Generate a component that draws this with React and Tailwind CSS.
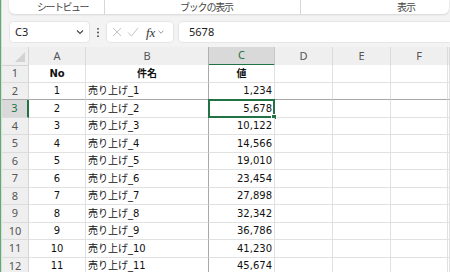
import React from "react";

const ui = { fontFamily: '"Noto Sans", "Noto Sans CJK JP", sans-serif' };
const data = { fontFamily: '"DejaVu Sans", "Noto Sans CJK JP", sans-serif' };
const jp = { fontFamily: '"Noto Sans CJK JP", sans-serif' };

const COLS = "grid-cols-[27px_57px_123px_66px_58px_58px_57px_1fr]";

const values = [1234, 5678, 10122, 14566, 19010, 23454, 27898, 32342, 36786, 41230, 45674];

function Chevron({ className }) {
  return (
    <svg viewBox="0 0 10 10" className={className} fill="none" stroke="currentColor" strokeWidth="1.1">
      <path d="M2 3.5 L5 6.5 L8 3.5" />
    </svg>
  );
}

function HeaderRow() {
  const letters = ["A", "B", "C", "D", "E", "F", ""];
  return (
    <div className={`grid ${COLS} h-[18px] shrink-0`}>
      <div className="relative bg-[#efefef] border-r border-b border-[#d4d4d4]">
        <svg viewBox="0 0 10 10" className="absolute right-[3px] bottom-[3px] w-[10px] h-[10px]">
          <path d="M10 0 L10 10 L0 10 Z" fill="#d2d2d2" />
        </svg>
      </div>
      {letters.map((l, i) => {
        const sel = l === "C";
        const freeze = l === "B";
        return (
          <div
            key={i}
            style={ui}
            className={`flex items-center justify-center text-[11px] ${
              sel
                ? "bg-[#d9d9d9] text-[#217346] border-b-2 border-b-[#217346] border-r border-r-[#c8c8c8]"
                : `bg-[#efefef] text-[#555] border-b border-b-[#d4d4d4] border-r ${freeze ? "border-r-[#b0b0b0]" : "border-r-[#dadada]"}`
            }`}
          >
            {l}
          </div>
        );
      })}
    </div>
  );
}

function DataRow({ r }) {
  const isHeader = r === 1;
  const sel = r === 3;
  const freezeBottom = r === 2;
  const n = r - 1;
  const cells = isHeader
    ? ["No", "件名", "値"]
    : [String(n), `売り上げ_${n}`, values[n - 1].toLocaleString("en-US")];
  const bottom = freezeBottom ? "border-b-[#a8a8a8]" : "border-b-[#e1e1e1]";
  return (
    <div className={`grid ${COLS} h-[17.5px] shrink-0`}>
      <div
        style={ui}
        className={`flex items-center justify-center text-[11px] border-b ${
          freezeBottom ? "border-b-[#a8a8a8]" : "border-b-[#dcdcdc]"
        } ${
          sel
            ? "bg-[#d9d9d9] text-[#217346] border-r-2 border-r-[#217346]"
            : "bg-[#efefef] text-[#555] border-r border-r-[#d4d4d4]"
        }`}
      >
        {r}
      </div>
      <div
        style={data}
        className={`flex items-center justify-center text-[10px] text-[#111] bg-white border-r border-r-[#e1e1e1] border-b ${bottom} ${
          isHeader ? "font-bold" : ""
        }`}
      >
        {cells[0]}
      </div>
      <div
        style={data}
        className={`flex items-center ${isHeader ? "justify-center font-bold" : "justify-start pl-[2px]"} text-[10px] text-[#111] bg-white border-r border-r-[#a8a8a8] border-b ${bottom}`}
      >
        {cells[1]}
      </div>
      <div
        style={data}
        className={`relative flex items-center ${isHeader ? "justify-center font-bold" : "justify-end pr-[2px]"} text-[10px] text-[#111] bg-white border-r border-r-[#e1e1e1] border-b ${bottom}`}
      >
        {cells[2]}
        {sel && (
          <div className="absolute left-[-1px] top-[-1px] right-[-1px] bottom-[-1px] border-2 border-[#217346]">
            <div className="absolute right-[-4px] bottom-[-4px] w-[6px] h-[6px] bg-[#217346] border border-white" />
          </div>
        )}
      </div>
      {[0, 1, 2, 3].map((i) => (
        <div key={i} className={`bg-white border-r border-r-[#e1e1e1] border-b ${bottom}`} />
      ))}
    </div>
  );
}

export default function App() {
  return (
    <div className="w-[450px] h-[272px] overflow-hidden bg-[#f3f3f3] flex">
      <div className="w-[2px] shrink-0 flex">
        <div className="w-[1px] bg-[#6aa57a]" />
        <div className="w-[1px] bg-[#cfe3d4]" />
      </div>
      <div className="flex-1 flex flex-col min-w-0">
        {/* Ribbon tabs */}
        <div className="h-[14px] shrink-0 flex pl-[7px] pr-[1px]">
          <div className="flex-1 flex bg-white rounded-b-[6px] shadow-[0_1px_2px_rgba(0,0,0,0.12)] overflow-hidden">
            <div className="w-[96px] shrink-0 flex items-center pl-[28px] border-r border-[#d6d6d6]">
              <span style={jp} className="text-[10px] leading-none tracking-[-1.5px] text-[#444] whitespace-nowrap">シートビュー</span>
            </div>
            <div className="w-[196px] shrink-0 flex items-center pl-[75px] border-r border-[#d6d6d6]">
              <span style={jp} className="text-[10px] leading-none tracking-[-1.2px] text-[#444] whitespace-nowrap">ブックの表示</span>
            </div>
            <div className="flex-1 flex items-center pl-[96px]">
              <span style={jp} className="text-[10px] leading-none tracking-[-1px] text-[#444] whitespace-nowrap">表示</span>
            </div>
          </div>
        </div>

        {/* Formula bar */}
        <div className="h-[20px] mt-[8px] shrink-0 flex items-stretch">
          <div className="ml-[8px] w-[79px] shrink-0 bg-white rounded-[4px] flex items-center justify-between pl-[5px] pr-[4px] shadow-[0_0_0_1px_#e6e6e6]">
            <span style={ui} className="text-[11px] text-[#222]">C3</span>
            <Chevron className="w-[10px] h-[10px] text-[#444]" />
          </div>
          <div className="w-[18px] shrink-0 flex items-center justify-center text-[#444]">
            <svg viewBox="0 0 4 12" className="w-[4px] h-[11px]">
              <circle cx="2" cy="2" r="1" fill="currentColor" />
              <circle cx="2" cy="6" r="1" fill="currentColor" />
              <circle cx="2" cy="10" r="1" fill="currentColor" />
            </svg>
          </div>
          <div className="w-[66px] shrink-0 bg-white rounded-[4px] flex items-center pl-[5px] pr-[1px] gap-[5px] shadow-[0_0_0_1px_#e6e6e6]">
            <svg viewBox="0 0 10 10" className="w-[10px] h-[10px]" stroke="#c4c4c4" strokeWidth="1">
              <path d="M1 1 L9 9 M9 1 L1 9" />
            </svg>
            <svg viewBox="0 0 12 10" className="w-[12px] h-[10px]" fill="none" stroke="#c4c4c4" strokeWidth="1">
              <path d="M1 5.5 L4.5 9 L11 1" />
            </svg>
            <span
              style={{ fontFamily: '"Liberation Serif", serif' }}
              className="italic text-[13px] leading-none text-[#333] ml-[2px]"
            >
              fx
            </span>
            <Chevron className="w-[8px] h-[8px] text-[#888] -ml-[3px]" />
          </div>
          <div className="ml-[6px] flex-1 bg-white rounded-l-[4px] flex items-center pl-[10px] shadow-[0_0_0_1px_#e6e6e6]">
            <span style={ui} className="text-[11px] text-[#222]">5678</span>
          </div>
        </div>

        {/* Grid */}
        <div className="mt-[5px] flex flex-col">
          <HeaderRow />
          {Array.from({ length: 12 }, (_, i) => (
            <DataRow key={i} r={i + 1} />
          ))}
        </div>
      </div>
    </div>
  );
}
